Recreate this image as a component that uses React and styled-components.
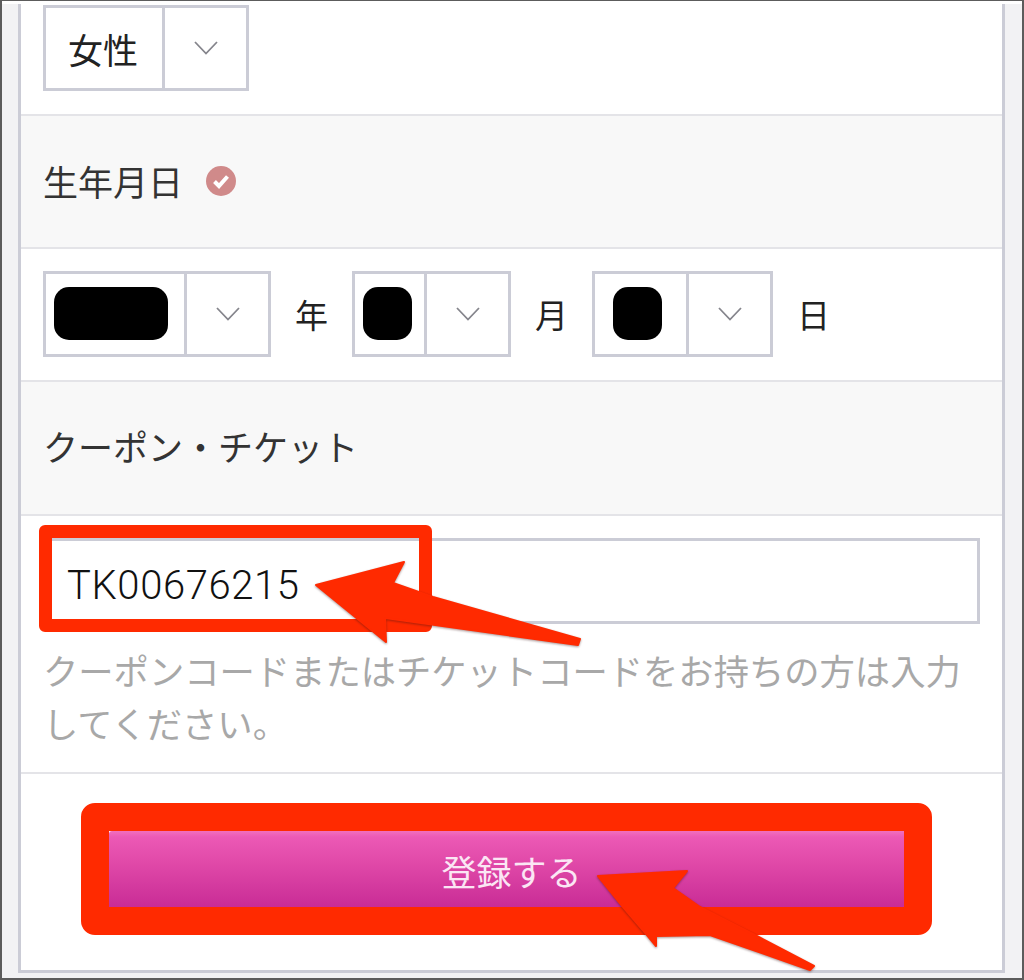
import React from "react";
import styled, { createGlobalStyle } from "styled-components";

const GlobalStyle = createGlobalStyle`
  html, body {
    margin: 0;
    padding: 0;
    background: #fff;
  }
  body {
    font-family: "Noto Sans CJK JP", "Noto Sans", sans-serif;
    color: #222;
  }
`;

const Frame = styled.div`
  position: relative;
  display: flex;
  width: 1024px;
  height: 980px;
  box-sizing: border-box;
  border: 2px solid #5c5c5c;
  border-top-width: 1px;
  padding: 0 17px 5px 16px;
  background: #f2f2f4;
  overflow: hidden;

  &::before {
    content: "";
    position: absolute;
    top: 0;
    left: 0;
    right: 0;
    height: 3px;
    background: #fff;
  }
`;

const Card = styled.div`
  display: flex;
  flex-direction: column;
  flex: 1;
  margin-top: 3px;
  background: #fff;
  border: 3px solid #cbccd6;
  border-top: 0;
`;

const Row = styled.div`
  display: flex;
  align-items: center;
  box-sizing: border-box;
  height: ${(props) => props.$height}px;
  padding: 0 22px;
  border-bottom: 2px solid #e4e4e8;
`;

const TopRow = styled(Row)`
  align-items: flex-start;
  padding-top: 1px;
`;

const LabelRow = styled(Row)`
  gap: 23px;
  padding-bottom: ${(props) => props.$lift || 0}px;
  background: #f8f8f8;
  font-size: 35px;
  color: #333;
`;

const DateRow = styled(Row)`
  gap: 24px;
  padding-bottom: 2px;
  font-size: 33px;
`;

const Select = styled.div`
  display: flex;
  box-sizing: border-box;
  width: ${(props) => props.$width}px;
  height: 86px;
  border: 3px solid #cbccd6;
`;

const SelectValue = styled.div`
  display: flex;
  flex: 1;
  align-items: center;
  padding-left: ${(props) => props.$pad}px;
  font-size: 35px;
  color: #222;
`;

const SelectArrow = styled.div`
  display: flex;
  align-items: center;
  justify-content: center;
  width: 81px;
  border-left: 3px solid #cbccd6;
`;

const Redacted = styled.div`
  width: ${(props) => props.$width}px;
  height: 53px;
  background: #000;
  border-radius: 15px;
`;

const CouponRow = styled.div`
  position: relative;
  box-sizing: border-box;
  height: 258px;
  padding: 22px 22px 0;
  border-bottom: 2px solid #e4e4e8;
`;

const CouponInput = styled.div`
  display: flex;
  align-items: center;
  box-sizing: border-box;
  height: 86px;
  padding: 8px 0 0 21px;
  border: 3px solid #cbccd6;
  font-family: "Roboto", "Liberation Sans", sans-serif;
  font-size: 40px;
  font-weight: 300;
  letter-spacing: 0.6px;
  color: #111;
`;

const Hint = styled.p`
  margin: 19px 0 0;
  font-size: 35.3px;
  line-height: 53px;
  color: #a8a8a8;
`;

const InputMark = styled.div`
  position: absolute;
  left: 18px;
  top: 9px;
  width: 393px;
  height: 107px;
  box-sizing: border-box;
  border: 13px solid #ff2a00;
  border-radius: 6px;
`;

const ButtonRow = styled.div`
  display: flex;
  flex: 1;
  padding: 29px 0 0 60px;
`;

const ButtonMark = styled.div`
  display: flex;
  box-sizing: border-box;
  width: 851px;
  height: 132px;
  border: 28px solid #ff2a00;
  border-radius: 14px;
`;

const SubmitButton = styled.button`
  flex: 1;
  padding: 2px 0 0 10px;
  border: 0;
  border-radius: 3px 0 0 0;
  background: linear-gradient(#f170bd 0, #ec59b5 8%, #e14aa9 40%, #c92c96 100%);
  font-family: inherit;
  font-size: 35px;
  color: #fbe6f4;
`;

const Annotations = styled.svg`
  position: absolute;
  top: -1px;
  left: -2px;
  width: 1024px;
  height: 980px;
  pointer-events: none;
  filter: drop-shadow(0 1px 1px rgba(60, 20, 20, 0.45));
`;

const Chevron = () => (
  <svg width="26" height="16" viewBox="0 0 26 16" fill="none" stroke="#85858c" strokeWidth="1.8">
    <polyline points="2,2 13,13.5 24,2" />
  </svg>
);

const CheckBadge = () => (
  <svg width="30" height="30" viewBox="0 0 30 30">
    <circle cx="15" cy="15" r="15" fill="#d08a8a" />
    <polyline points="8.5,15.5 13,20 21.5,10.5" fill="none" stroke="#fff" strokeWidth="4" />
  </svg>
);

function App() {
  return (
    <Frame>
      <GlobalStyle />
      <Card>
        <TopRow $height={112}>
          <Select $width={206}>
            <SelectValue $pad={22}>女性</SelectValue>
            <SelectArrow>
              <Chevron />
            </SelectArrow>
          </Select>
        </TopRow>
        <LabelRow $height={133} $lift={2}>
          生年月日
          <CheckBadge />
        </LabelRow>
        <DateRow $height={133}>
          <Select $width={228}>
            <SelectValue $pad={8}>
              <Redacted $width={114} />
            </SelectValue>
            <SelectArrow>
              <Chevron />
            </SelectArrow>
          </Select>
          年
          <Select $width={159}>
            <SelectValue $pad={8}>
              <Redacted $width={49} />
            </SelectValue>
            <SelectArrow>
              <Chevron />
            </SelectArrow>
          </Select>
          月
          <Select $width={181}>
            <SelectValue $pad={18}>
              <Redacted $width={49} />
            </SelectValue>
            <SelectArrow>
              <Chevron />
            </SelectArrow>
          </Select>
          日
        </DateRow>
        <LabelRow $height={134} $lift={5}>
          クーポン・チケット
        </LabelRow>
        <CouponRow>
          <CouponInput>TK00676215</CouponInput>
          <Hint>クーポンコードまたはチケットコードをお持ちの方は入力してください。</Hint>
          <InputMark />
        </CouponRow>
        <ButtonRow>
          <ButtonMark>
            <SubmitButton>登録する</SubmitButton>
          </ButtonMark>
        </ButtonRow>
      </Card>
      <Annotations viewBox="0 0 1024 980">
        <polygon
          points="316,585 404,562 393,583 433,597 580,639 578,645 385,618 386,642"
          fill="#ff2a00"
          stroke="#ff2a00"
          strokeWidth="2"
          strokeLinejoin="round"
        />
        <polygon
          points="598,876 687,871 673,888 700,907 755,935 814,966 810,970 710,935 656,936 656,946 647,935 623,907"
          fill="#ff2a00"
          stroke="#ff2a00"
          strokeWidth="2"
          strokeLinejoin="round"
        />
      </Annotations>
    </Frame>
  );
}

export default App;
